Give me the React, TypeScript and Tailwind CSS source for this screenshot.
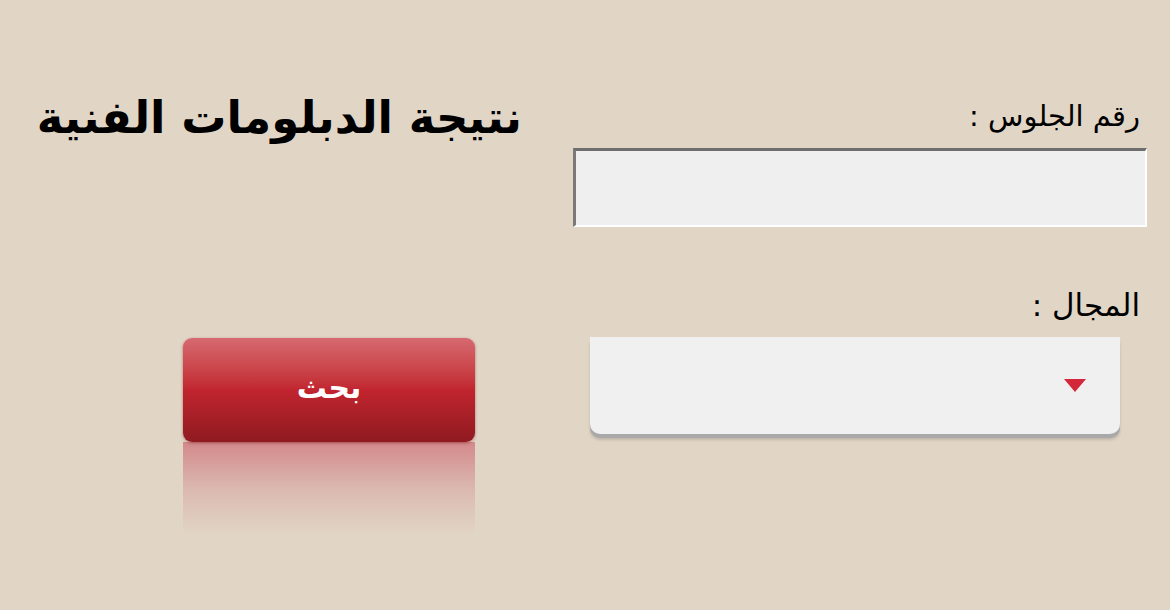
import React from 'react';

const arabic = { fontFamily: '"DejaVu Sans", "Noto Sans", sans-serif' };

const App: React.FC = () => {
  return (
    <div className="w-[1170px] h-[610px] bg-[#e1d5c6] overflow-hidden flex justify-between pl-[42px] pr-[23px]" dir="ltr">
      {/* left column: title + search button */}
      <div className="w-[480px] flex flex-col">
        <h1 dir="rtl" className="mt-[86px] text-[45px] leading-[64px] font-black text-black text-center whitespace-nowrap" style={arabic}>
          نتيجة الدبلومات الفنية
        </h1>
        <div className="mt-[188px] ml-[141px] w-[292px]">
          <button
            dir="rtl"
            className="w-full h-[104px] rounded-[9px] bg-gradient-to-b from-[#d66970] via-[#c1252f] to-[#8f1a20] shadow-[0_1px_3px_rgba(120,20,20,0.5)] text-white text-[30px] font-bold pb-[6px]"
            style={arabic}
          >
            بحث
          </button>
          <div className="h-[93px] rounded-b-[9px] bg-gradient-to-b from-[#d3898b] via-[#d8aca7]/70 to-[#e1d5c6]/0" />
        </div>
      </div>

      {/* right column: form fields */}
      <div className="w-[574px] flex flex-col" dir="rtl">
        <label className="mt-[88px] pr-[7px] text-[29px] leading-[56px] text-black" style={arabic}>
          رقم الجلوس :
        </label>
        <div className="mt-[4px] h-[79px] bg-[#efefef] border-t-[3px] border-l-[3px] border-r-2 border-b-2 border-t-[#6e6e6e] border-l-[#7a7a7a] border-r-white border-b-white" />

        <label className="mt-[50px] pr-[7px] text-[31px] leading-[56px] text-black" style={arabic}>
          المجال :
        </label>
        <div className="mt-[4px] mr-[27px] ml-[17px] h-[97px] rounded-b-[10px] bg-[#f0f0f0] shadow-[0_4px_0_#a9a9a9,0_6px_3px_rgba(0,0,0,0.15)] flex items-center pr-[34px]">
          <svg width="22" height="14" viewBox="0 0 22 14">
            <polygon points="0,0 22,0 11,13" fill="#d4283a" />
          </svg>
        </div>
      </div>
    </div>
  );
};

export default App;
